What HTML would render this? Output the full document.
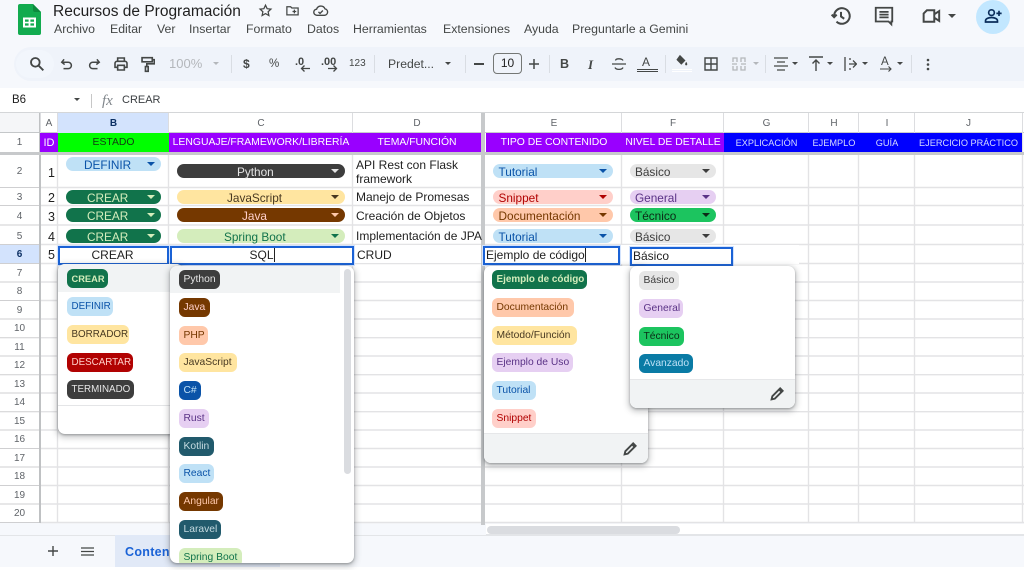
<!DOCTYPE html>
<html lang="es"><head><meta charset="utf-8"><title>Recursos de Programación</title>
<style>
html,body{margin:0;padding:0}
body{width:1024px;height:570px;overflow:hidden;position:relative;background:#f6f8fc;font-family:"Liberation Sans",sans-serif;color:#1f1f1f;filter:blur(.35px)}
div,span,svg{position:absolute;box-sizing:border-box}
.t{white-space:nowrap;line-height:14px}
.m{top:22px;font-size:12.3px;color:#444746}
.tb{top:57px;font-size:11px;color:#444746}
.ch{top:113px;height:20px;font-size:10px;line-height:21px;text-align:center;color:#5f6368}
.hd{top:133px;height:19px;font-size:10.4px;line-height:20px;text-align:center;color:#fff;white-space:nowrap}
.rn{left:0;width:39px;text-align:center;font-size:10px;color:#5f6368;line-height:14px;margin-top:1px}
.id{left:40px;width:15px;text-align:right;font-size:12.5px;line-height:14px;margin-top:1px}
.cc{height:14px;border-radius:7px;font-size:11.8px;line-height:16px;white-space:nowrap}
.cc i{position:absolute;right:6px;top:5px;width:0;height:0;border:4px solid transparent;border-bottom:0;border-top-color:inherit;border-top-width:4px}
.dt{left:356px;font-size:12px;line-height:14px;white-space:nowrap}
.pop{background:#fff;border-radius:7px;box-shadow:0 1px 2px rgba(60,64,67,.4),0 2px 6px 2px rgba(60,64,67,.25);overflow:hidden}
.d{height:19px;border-radius:6px;font-size:10.3px;line-height:20px;padding-left:4.5px;white-space:nowrap}
.sel{border:2px solid #1a62d6;background:#fff;height:19px;font-size:12px;line-height:15px;white-space:nowrap;box-shadow:0 0 0 1px #d3e3fd}
.car{width:0;height:0;border:3.5px solid transparent;border-bottom:0;border-top:3.5px solid #444746}
.sep{top:55px;width:1px;height:18px;background:#d9dde3}
</style></head><body>

<!-- logo -->
<svg style="left:18px;top:4px" width="23" height="31" viewBox="0 0 23 31"><path d="M2 0H15L23 8V29a2 2 0 0 1-2 2H2a2 2 0 0 1-2-2V2a2 2 0 0 1 2-2z" fill="#12ab4f"/><path d="M15 0L23 8H17a2 2 0 0 1-2-2z" fill="#0c8a3e"/><path d="M5 13.500h13v10H5zM7 15.500v2.200h3.600v-2.200zM12.400 15.500v2.200H16v-2.200zM7 19.400v2.200h3.600v-2.200zM12.400 19.400v2.200H16v-2.200z" fill="#fff" fill-rule="evenodd"/></svg>

<div class="t" style="left:53px;top:3px;font-size:15.5px;line-height:17px;color:#1f1f1f">Recursos de Programación</div>
<svg style="left:258px;top:3px" width="15" height="15" viewBox="0 0 24 24" fill="none" stroke="#444746" stroke-width="2"><path d="M12 3.500l2.600 5.600 6.100.7-4.500 4.200 1.200 6L12 17l-5.400 3 1.200-6-4.500-4.200 6.100-.7z"/></svg>
<svg style="left:285px;top:3px" width="15" height="15" viewBox="0 0 24 24" fill="none" stroke="#444746" stroke-width="2"><path d="M3 6h6l2 2h10v11H3zM12 13.500h6M15 10.500v6"/></svg>
<svg style="left:312px;top:3px" width="17" height="15" viewBox="0 0 24 22" fill="none" stroke="#444746" stroke-width="2"><path d="M7 18a4.500 4.500 0 0 1-.7-9A6.500 6.500 0 0 1 18.500 8.500 4.800 4.800 0 0 1 18 18zM9 13l2.300 2.300L15.500 11"/></svg>

<div class="t m" style="left:54px">Archivo</div><div class="t m" style="left:110px">Editar</div><div class="t m" style="left:157px">Ver</div><div class="t m" style="left:189px">Insertar</div><div class="t m" style="left:246px">Formato</div><div class="t m" style="left:307px">Datos</div><div class="t m" style="left:353px">Herramientas</div><div class="t m" style="left:443px">Extensiones</div><div class="t m" style="left:524px">Ayuda</div><div class="t m" style="left:572px">Preguntarle a Gemini</div>

<!-- top right -->
<svg style="left:830px;top:5px" width="22" height="22" viewBox="0 0 24 24" fill="none" stroke="#444746" stroke-width="2.200"><path d="M4.500 12a8.500 8.500 0 1 1 2.600 6.100M1.800 10.500l2.700 2.800 2.800-2.800" /><path d="M12 7.500V12.500l3.500 2.500"/></svg>
<svg style="left:873px;top:5px" width="22" height="22" viewBox="0 0 24 24" fill="none" stroke="#444746" stroke-width="2"><path d="M3 3h18v15h-1v3l-3-3H3zM7 7.500h10M7 10.500h10M7 13.500h10"/></svg>
<svg style="left:921px;top:7px" width="20" height="18" viewBox="0 0 24 22" fill="none" stroke="#444746" stroke-width="2.400"><path d="M7 4h9v14H3V8zM16 9l6-4v12l-6-4" /></svg>
<div class="car" style="left:948px;top:14px;border-width:4px;border-bottom:0;border-top:4px solid #444746"></div>
<div style="left:976px;top:0;width:34px;height:34px;border-radius:50%;background:#c2e7ff"></div>
<svg style="left:984px;top:8px" width="18" height="16" viewBox="0 0 24 20" fill="none" stroke="#0a2c5a" stroke-width="2.200"><circle cx="10" cy="5.500" r="3.800"/><path d="M2 18v-1.500c0-3 4-4.500 8-4.500s8 1.500 8 4.500V18zM20 3v7M16.500 6.500h7"/></svg>

<!-- toolbar -->
<div style="left:14px;top:47px;width:1010px;height:34px;background:#eff3fa;border-radius:17px 0 0 17px"></div>
<div style="left:16px;top:50px;width:38px;height:28px;background:#f2f6fc;border-radius:14px"></div>
<svg style="left:29px;top:56px" width="16" height="16" viewBox="0 0 24 24" fill="none" stroke="#444746" stroke-width="2.800"><circle cx="9.500" cy="9.500" r="6.500"/><path d="M14.500 14.500l7 7"/></svg>
<svg style="left:60px;top:57px" width="14" height="14" viewBox="0 0 24 24" fill="none" stroke="#444746" stroke-width="2.600"><path d="M7 4L3 9l5 4M3.500 9H14a5.500 5.500 0 0 1 0 11H6"/></svg>
<svg style="left:87px;top:57px" width="14" height="14" viewBox="0 0 24 24" fill="none" stroke="#444746" stroke-width="2.600"><path d="M17 4l4 5-5 4M20.500 9H10a5.500 5.500 0 0 0 0 11h8"/></svg>
<svg style="left:113px;top:56px" width="16" height="16" viewBox="0 0 24 24" fill="none" stroke="#444746" stroke-width="2.400"><path d="M7 8V3h10v5M7 17H3v-6a3 3 0 0 1 3-3h12a3 3 0 0 1 3 3v6h-4M7 14h10v7H7z"/></svg>
<svg style="left:140px;top:56px" width="15" height="17" viewBox="0 0 22 24" fill="none" stroke="#444746" stroke-width="2.400"><path d="M3 2h15v6H3zM18 5h3v6H10v4M8 15h4v7H8z"/></svg>
<div class="t tb" style="left:169px;font-size:13px;color:#b4b7bb;top:57px">100%</div>
<div class="car" style="left:213px;top:62px;border-top-color:#b4b7bb"></div>
<div class="sep" style="left:231px"></div>
<div class="t tb" style="left:243px;font-size:12px;font-weight:bold">$</div>
<div class="t tb" style="left:269px;font-size:11.500px">%</div>
<div class="t tb" style="left:295px;font-size:11px;font-weight:bold;top:55px">.0</div>
<svg style="left:300px;top:64px" width="10" height="8" viewBox="0 0 10 8" fill="none" stroke="#444746" stroke-width="1.300"><path d="M10 4.500H2M4.500 1.500L1.500 4.500l3 3"/></svg>
<div class="t tb" style="left:321px;font-size:11px;font-weight:bold;top:55px">.00</div>
<svg style="left:328px;top:64px" width="10" height="8" viewBox="0 0 10 8" fill="none" stroke="#444746" stroke-width="1.300"><path d="M0 4.500h8M5.500 1.500l3 3-3 3"/></svg>
<div class="t tb" style="left:349px;font-size:10px">123</div>
<div class="sep" style="left:374px"></div>
<div class="t tb" style="left:388px;font-size:12.200px">Predet...</div>
<div class="car" style="left:445px;top:62px"></div>
<div class="sep" style="left:465px"></div>
<div style="left:474px;top:63px;width:10px;height:1.500px;background:#444746"></div>
<div style="left:493px;top:53px;width:29px;height:21px;border:1px solid #747775;border-radius:4px;font-size:12px;line-height:19px;text-align:center;color:#1f1f1f">10</div>
<svg style="left:529px;top:59px" width="10" height="10" viewBox="0 0 10 10" stroke="#444746" stroke-width="1.500"><path d="M5 0v10M0 5h10"/></svg>
<div class="sep" style="left:549px"></div>
<div class="t tb" style="left:560px;font-size:12.500px;font-weight:bold">B</div>
<div class="t" style="left:588px;top:57px;font:italic bold 13px 'Liberation Serif',serif;color:#444746">I</div>
<svg style="left:612px;top:57px" width="14" height="14" viewBox="0 0 14 14" fill="none" stroke="#444746" stroke-width="1.300"><path d="M0 7h14M11 3.500C10 1.500 4 1 3.500 3.500M3 10.500C4 13 10 13 11 10.500"/></svg>
<div class="t tb" style="left:642px;font-size:12px;top:55px">A</div>
<div style="left:637px;top:69px;width:21px;height:3px;border-top:1px solid #444746;border-bottom:1px solid #444746"></div>
<div class="sep" style="left:665px"></div>
<svg style="left:675px;top:54px" width="14" height="13" viewBox="0 0 20 18"><path d="M7 1l8 8-6 6-7-7z" fill="#444746"/><path d="M16 11c2 2.500 2 5 0 5s-2-2.500 0-5z" fill="#444746"/></svg>
<div style="left:672px;top:69px;width:20px;height:3px;border-top:1px solid #fff;border-bottom:1px solid #fff"></div>
<svg style="left:704px;top:57px" width="14" height="14" viewBox="0 0 14 14" fill="none" stroke="#444746" stroke-width="1.400"><path d="M1 1h12v12H1zM7 1v12M1 7h12"/></svg>
<svg style="left:732px;top:57px" width="14" height="14" viewBox="0 0 14 14" fill="none" stroke="#b4b7bb" stroke-width="1.300"><path d="M1 5V1h4v4M9 5V1h4v4M1 9v4h4V9M9 9v4h4V9M0 7h5M9 7h5"/></svg>
<div class="car" style="left:753px;top:62px;border-top-color:#b4b7bb"></div>
<div class="sep" style="left:765px"></div>
<svg style="left:774px;top:57px" width="14" height="14" viewBox="0 0 14 14" stroke="#444746" stroke-width="1.300"><path d="M0 1h14M3 5h8M0 9h14M3 13h8"/></svg>
<div class="car" style="left:792px;top:62px"></div>
<svg style="left:809px;top:56px" width="14" height="15" viewBox="0 0 14 15" fill="none" stroke="#444746" stroke-width="1.400"><path d="M0 1h14M7 15V4M3.500 7.500L7 4l3.500 3.500"/></svg>
<div class="car" style="left:827px;top:62px"></div>
<svg style="left:844px;top:57px" width="13" height="14" viewBox="0 0 13 14" fill="none" stroke="#444746" stroke-width="1.300"><path d="M1 0v14M5 7h7M9 3.500L12.500 7 9 10.500M6 1v2M6 11v2"/></svg>
<div class="car" style="left:862px;top:62px"></div>
<div class="t tb" style="left:881px;font-size:11.500px;top:55px">A</div>
<svg style="left:880px;top:66px" width="12" height="6" viewBox="0 0 12 6" fill="none" stroke="#444746" stroke-width="1.100"><path d="M0 3h11M8.500 .5L11 3 8.500 5.500"/></svg>
<div class="car" style="left:897px;top:62px"></div>
<div class="sep" style="left:911px"></div>
<svg style="left:926px;top:58px" width="4" height="13" viewBox="0 0 4 13" fill="#444746"><circle cx="2" cy="2" r="1.300"/><circle cx="2" cy="6.500" r="1.300"/><circle cx="2" cy="11" r="1.300"/></svg>

<!-- formula bar -->
<div style="left:0;top:88px;width:1024px;height:25px;background:#fff;border-bottom:1px solid #d4d6d8"></div>
<div class="t" style="left:12px;top:93px;font-size:11.500px">B6</div>
<div class="car" style="left:74px;top:98px"></div>
<div style="left:91px;top:94px;width:1px;height:14px;background:#c7c7c7"></div>
<div class="t" style="left:102px;top:93px;font:italic 15px 'Liberation Serif',serif;color:#80868b">fx</div>
<div class="t" style="left:122px;top:93px;font-size:11px;color:#3c4043">CREAR</div>

<!-- sheet base -->
<div style="left:0;top:113px;width:1024px;height:410px;background:#fff"></div>
<div style="left:0;top:523px;width:1024px;height:12px;background:#f6f8fc"></div>
<div style="left:486px;top:524px;width:538px;height:11px;background:#fff;border-bottom:1px solid #e3e5e8"></div>
<div style="left:487px;top:526px;width:193px;height:8px;border-radius:4px;background:#dadce0"></div>

<!-- grid -->
<svg style="left:0;top:0" width="1024" height="570" fill="none">
<g stroke="#e3e3e5" stroke-width="1.400">
<path d="M40 187.500H1024M40 205.500H1024M40 225H1024M40 244.500H1024M40 263.500H1024M40 282H1024M40 300.500H1024M40 319H1024M40 337.700H1024M40 356H1024M40 374.700H1024M40 393H1024M40 411.700H1024M40 430H1024M40 448.500H1024M40 467H1024M40 485.500H1024M40 504H1024M40 522.500H1024"/>
<path d="M57.500 113V523M168.500 113V523M352.500 113V523M621.500 113V523M723.500 113V523M808.500 113V523M858.500 113V523M914.500 113V523M1022.500 113V523"/>
</g>
<g stroke="#cfcfd1" stroke-width="1">
<path d="M0 187.500H40M0 205.500H40M0 225H40M0 244.500H40M0 263.500H40M0 282H40M0 300.500H40M0 319H40M0 337.700H40M0 356H40M0 374.700H40M0 393H40M0 411.700H40M0 430H40M0 448.500H40M0 467H40M0 485.500H40M0 504H40M0 522.500H40"/>
</g>
</svg>
<div style="left:0;top:113px;width:40px;height:20px;background:#f5f6f8;border-bottom:1px solid #c4c7c9"></div>
<div style="left:0;top:245px;width:39px;height:18px;background:#d3e3fd"></div>
<div style="left:39px;top:113px;width:1.500px;height:410px;background:#bfc1c3"></div>
<div style="left:40px;top:113px;width:984px;height:20px;background:#fff;border-bottom:1px solid #c9cbcd"></div>
<div class="ch" style="left:40px;width:18px">A</div>
<div class="ch" style="left:58px;width:111px;background:#d3e3fd;color:#0b2f63;font-weight:bold">B</div>
<div class="ch" style="left:169px;width:184px">C</div>
<div class="ch" style="left:353px;width:128px">D</div>
<div class="ch" style="left:486px;width:136px">E</div>
<div class="ch" style="left:622px;width:102px">F</div>
<div class="ch" style="left:724px;width:85px">G</div>
<div class="ch" style="left:809px;width:50px">H</div>
<div class="ch" style="left:859px;width:56px">I</div>
<div class="ch" style="left:915px;width:107px">J</div>
<svg style="left:0;top:113px" width="1024" height="20" stroke="#dcdde0"><path d="M40.500 0V20M57.500 0V20M168.500 0V20M352.500 0V20M621.500 0V20M723.500 0V20M808.500 0V20M858.500 0V20M914.500 0V20M1022.500 0V20"/></svg>

<!-- header row -->
<div class="hd" style="left:40px;width:18px;background:#9900ff;font-size:11px">ID</div>
<div class="hd" style="left:58px;width:111px;background:#00ff00;color:#123a12">ESTADO</div>
<div class="hd" style="left:169px;width:312px;background:#9900ff"></div>
<div class="hd" style="left:169px;width:184px;background:#9900ff">LENGUAJE/FRAMEWORK/LIBRERÍA</div>
<div class="hd" style="left:353px;width:128px;background:#9900ff">TEMA/FUNCIÓN</div>
<div class="hd" style="left:486px;width:136px;background:#9900ff">TIPO DE CONTENIDO</div>
<div class="hd" style="left:622px;width:102px;background:#9900ff">NIVEL DE DETALLE</div>
<div class="hd" style="left:724px;width:85px;background:#0000ff;font-size:9.200px;color:#d6dcff">EXPLICACIÓN</div>
<div class="hd" style="left:809px;width:50px;background:#0000ff;font-size:9.200px;color:#d6dcff">EJEMPLO</div>
<div class="hd" style="left:859px;width:56px;background:#0000ff;font-size:9.200px;color:#d6dcff">GUÍA</div>
<div class="hd" style="left:915px;width:107px;background:#0000ff;font-size:9.200px;color:#d6dcff">EJERCICIO PRÁCTICO</div>
<div style="left:0;top:152px;width:1024px;height:3px;background:#c7c9cb"></div>
<div style="left:481px;top:113px;width:4px;height:412px;background:#c7c9cb"></div>

<!-- row numbers -->
<div class="rn" style="top:135px">1</div><div class="rn" style="top:164px">2</div><div class="rn" style="top:190px">3</div><div class="rn" style="top:209px">4</div><div class="rn" style="top:229px">5</div>
<div class="rn" style="top:247px;font-weight:bold;color:#0b2f63">6</div>
<div class="rn" style="top:266px">7</div><div class="rn" style="top:284px">8</div><div class="rn" style="top:303px">9</div><div class="rn" style="top:321px">10</div><div class="rn" style="top:340px">11</div><div class="rn" style="top:358px">12</div><div class="rn" style="top:377px">13</div><div class="rn" style="top:395px">14</div><div class="rn" style="top:414px">15</div><div class="rn" style="top:432px">16</div><div class="rn" style="top:451px">17</div><div class="rn" style="top:469px">18</div><div class="rn" style="top:488px">19</div><div class="rn" style="top:506px">20</div>
<div class="id" style="top:165px">1</div><div class="id" style="top:190px">2</div><div class="id" style="top:209px">3</div><div class="id" style="top:229px">4</div><div class="id" style="top:247px">5</div>

<!-- chips B -->
<div class="cc" style="left:66px;top:157px;width:95px;background:#bfe1f6;color:#0a53a8;padding-left:18px;border-top-color:#0a53a8">DEFINIR<i style="border-top-color:#0a53a8"></i></div>
<div class="cc" style="left:66px;top:190px;width:95px;background:#11734b;color:#d4edbc;padding-left:21px">CREAR<i style="border-top-color:#d4edbc"></i></div>
<div class="cc" style="left:66px;top:208px;width:95px;background:#11734b;color:#d4edbc;padding-left:21px">CREAR<i style="border-top-color:#d4edbc"></i></div>
<div class="cc" style="left:66px;top:229px;width:95px;background:#11734b;color:#d4edbc;padding-left:21px">CREAR<i style="border-top-color:#d4edbc"></i></div>
<!-- chips C -->
<div class="cc" style="left:177px;top:164px;width:168px;background:#3d3d3d;color:#e5e5e5;padding-left:60px">Python<i style="border-top-color:#e5e5e5"></i></div>
<div class="cc" style="left:177px;top:190px;width:168px;background:#ffe5a0;color:#473821;padding-left:50px">JavaScript<i style="border-top-color:#473821"></i></div>
<div class="cc" style="left:177px;top:208px;width:168px;background:#753800;color:#ffcfc9;padding-left:65px">Java<i style="border-top-color:#ffc8aa"></i></div>
<div class="cc" style="left:177px;top:229px;width:168px;background:#d4edbc;color:#11734b;padding-left:47px">Spring Boot<i style="border-top-color:#11734b"></i></div>
<!-- D -->
<div class="dt" style="top:158px">API Rest con Flask</div><div class="dt" style="top:172px">framework</div>
<div class="dt" style="top:190px">Manejo de Promesas</div><div class="dt" style="top:209px">Creación de Objetos</div><div class="dt" style="top:229px">Implementación de JPA</div>
<!-- chips E -->
<div class="cc" style="left:493px;top:164px;width:120px;background:#bfe1f6;color:#0a53a8;padding-left:5.500px">Tutorial<i style="border-top-color:#0a53a8"></i></div>
<div class="cc" style="left:493px;top:190px;width:120px;background:#ffcfc9;color:#b10202;padding-left:5.500px">Snippet<i style="border-top-color:#b10202"></i></div>
<div class="cc" style="left:493px;top:208px;width:120px;background:#ffc8aa;color:#753800;padding-left:5.500px">Documentación<i style="border-top-color:#753800"></i></div>
<div class="cc" style="left:493px;top:229px;width:120px;background:#bfe1f6;color:#0a53a8;padding-left:5.500px">Tutorial<i style="border-top-color:#0a53a8"></i></div>
<!-- chips F -->
<div class="cc" style="left:630px;top:164px;width:86px;background:#e6e6e6;color:#3d3d3d;padding-left:5px">Básico<i style="border-top-color:#3d3d3d"></i></div>
<div class="cc" style="left:630px;top:190px;width:86px;background:#e6cff2;color:#5a3286;padding-left:5px">General<i style="border-top-color:#5a3286"></i></div>
<div class="cc" style="left:630px;top:208px;width:86px;background:#1cc45f;color:#0c2a16;padding-left:5px">Técnico<i style="border-top-color:#0c2a16"></i></div>
<div class="cc" style="left:630px;top:229px;width:86px;background:#e6e6e6;color:#3d3d3d;padding-left:5px">Básico<i style="border-top-color:#3d3d3d"></i></div>

<!-- row 6 white editors -->
<div style="left:621px;top:245px;width:178px;height:19px;background:#fff"></div>
<div style="left:353px;top:245px;width:128px;height:18px;background:#fff"></div>
<div class="dt" style="left:357px;top:248px">CRUD</div>
<div class="sel" style="left:58px;top:246px;width:111px;text-align:center;padding-right:2px">CREAR</div>
<div class="sel" style="left:170px;top:246px;width:184px;text-align:center">SQL<span style="position:static;border-left:1px solid #222;margin-left:0"></span></div>
<div class="sel" style="left:483px;top:246px;width:137px;padding-left:1px">Ejemplo de código<span style="position:static;border-left:1px solid #222"></span></div>
<div class="sel" style="left:630px;top:247px;width:103px;padding-left:1px">Básico</div>

<!-- dropdown B -->
<div class="pop" style="left:58px;top:264px;width:125px;height:170px">
<div style="left:0;top:0;width:125px;height:28px;background:#f1f3f4"></div>
<div style="left:0;top:141px;width:125px;height:1px;background:#e4e5e7"></div>
<div class="d" style="left:9px;top:5px;width:41px;background:#11734b;color:#d4edbc;font-weight:bold;font-size:9.300px">CREAR</div>
<div class="d" style="left:9px;top:33px;width:46px;background:#bfe1f6;color:#0a53a8;font-size:9.800px">DEFINIR</div>
<div class="d" style="left:9px;top:61px;width:62px;background:#ffe5a0;color:#473821;font-size:9.800px">BORRADOR</div>
<div class="d" style="left:9px;top:89px;width:66px;background:#b10202;color:#ffcfc9;font-size:9.800px">DESCARTAR</div>
<div class="d" style="left:9px;top:116px;width:67px;background:#3d3d3d;color:#e5e5e5;font-size:9.800px">TERMINADO</div>
</div>

<!-- tab bar -->
<div style="left:0;top:535px;width:1024px;height:32px;background:#f6f8fc;border-top:1px solid #e3e5e8"></div>
<div style="left:0;top:567px;width:1024px;height:3px;background:#fff"></div>
<div style="left:115px;top:535px;width:165px;height:32px;background:#e1e9f7"></div>
<svg style="left:48px;top:546px" width="10" height="10" viewBox="0 0 10 10" stroke="#444746" stroke-width="1.400"><path d="M5 0v10M0 5h10"/></svg>
<svg style="left:81px;top:547px" width="13" height="9" viewBox="0 0 13 9" stroke="#444746" stroke-width="1.300"><path d="M0 1h13M0 4.500h13M0 8h13"/></svg>
<div class="t" style="left:125px;top:545px;font-size:12.500px;font-weight:bold;color:#1a62d6;letter-spacing:.3px">Conten</div>

<!-- dropdown C -->
<div class="pop" style="left:170px;top:266px;width:184px;height:297px">
<div style="left:0;top:0;width:170px;height:27px;background:#f1f3f4"></div>
<div style="left:174px;top:3px;width:7px;height:205px;border-radius:4px;background:#dadce0"></div>
<div class="d" style="left:9px;top:4px;width:41px;background:#3d3d3d;color:#e5e5e5">Python</div>
<div class="d" style="left:9px;top:32px;width:31px;background:#753800;color:#ffcfc9">Java</div>
<div class="d" style="left:9px;top:60px;width:29px;background:#ffc8aa;color:#753800">PHP</div>
<div class="d" style="left:9px;top:87px;width:58px;background:#ffe5a0;color:#473821">JavaScript</div>
<div class="d" style="left:9px;top:115px;width:22px;background:#0a53a8;color:#bfe1f6">C#</div>
<div class="d" style="left:9px;top:143px;width:30px;background:#e6cff2;color:#5a3286">Rust</div>
<div class="d" style="left:9px;top:171px;width:35px;background:#215a6c;color:#c6dbe1">Kotlin</div>
<div class="d" style="left:9px;top:198px;width:35px;background:#bfe1f6;color:#0a53a8">React</div>
<div class="d" style="left:9px;top:226px;width:44px;background:#753800;color:#ffc8aa">Angular</div>
<div class="d" style="left:9px;top:254px;width:42px;background:#215a6c;color:#c6dbe1">Laravel</div>
<div class="d" style="left:9px;top:282px;width:63px;background:#d4edbc;color:#11734b">Spring Boot</div>
</div>

<!-- dropdown E -->
<div class="pop" style="left:484px;top:266px;width:164px;height:197px">
<div style="left:0;top:167px;width:164px;height:30px;background:#f1f3f4;border-top:1px solid #e6e7e9"></div>
<div class="d" style="left:8px;top:4px;width:95px;background:#11734b;color:#d4edbc;font-weight:bold;font-size:9.900px">Ejemplo de código</div>
<div class="d" style="left:8px;top:32px;width:82px;background:#ffc8aa;color:#753800">Documentación</div>
<div class="d" style="left:8px;top:60px;width:85px;background:#ffe5a0;color:#473821">Método/Función</div>
<div class="d" style="left:8px;top:87px;width:81px;background:#e6cff2;color:#5a3286">Ejemplo de Uso</div>
<div class="d" style="left:8px;top:115px;width:44px;background:#bfe1f6;color:#0a53a8">Tutorial</div>
<div class="d" style="left:8px;top:143px;width:44px;background:#ffcfc9;color:#b10202">Snippet</div>
<svg style="left:139px;top:175px" width="15" height="15" viewBox="0 0 14 14" fill="none" stroke="#444746" stroke-width="1.800"><path d="M1.500 12.500l.7-3L9.500 2.200l2.300 2.300-7.300 7.300zM8.500 3.200l2.300 2.300"/></svg>
</div>

<!-- dropdown F -->
<div class="pop" style="left:630px;top:266px;width:165px;height:142px">
<div style="left:0;top:113px;width:165px;height:29px;background:#f1f3f4;border-top:1px solid #e6e7e9"></div>
<div class="d" style="left:9px;top:5px;width:40px;background:#e6e6e6;color:#3d3d3d">Básico</div>
<div class="d" style="left:9px;top:33px;width:44px;background:#e6cff2;color:#5a3286">General</div>
<div class="d" style="left:9px;top:61px;width:45px;background:#1cc45f;color:#0c2a16">Técnico</div>
<div class="d" style="left:9px;top:88px;width:54px;background:#0a7ba5;color:#bfe1f6">Avanzado</div>
<svg style="left:140px;top:120px" width="15" height="15" viewBox="0 0 14 14" fill="none" stroke="#444746" stroke-width="1.800"><path d="M1.500 12.500l.7-3L9.500 2.200l2.300 2.300-7.300 7.300zM8.500 3.200l2.300 2.300"/></svg>
</div>

</body></html>
